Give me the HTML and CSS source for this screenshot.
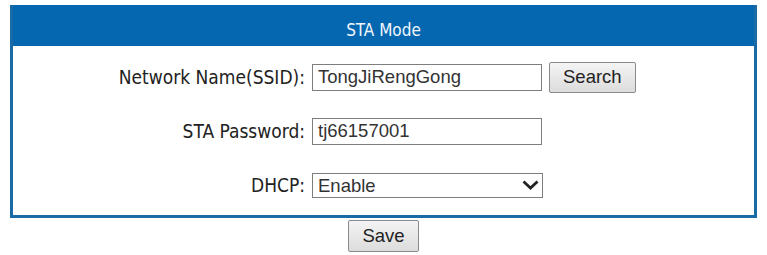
FILE: index.html
```html
<!DOCTYPE html>
<html lang="en">
<head>
    <meta charset="UTF-8">
    <meta name="viewport" content="width=device-width, initial-scale=1.0">
    <title>STA Mode</title>
    <link rel="stylesheet" href="styles.css">
</head>
<body>

    <div class="panel">
        <div class="panel-title">STA Mode</div>

        <div class="form-grid">
            <label class="field-label" for="ssid">Network Name(SSID):</label>
            <div class="field">
                <input type="text" id="ssid" class="text-input" value="TongJiRengGong">
                <button class="btn">Search</button>
            </div>

            <label class="field-label" for="password">STA Password:</label>
            <div class="field">
                <input type="text" id="password" class="text-input" value="tj66157001">
            </div>

            <label class="field-label" for="dhcp">DHCP:</label>
            <div class="field">
                <div class="select-wrap">
                    <select id="dhcp" class="select-input">
                        <option>Enable</option>
                        <option>Disable</option>
                    </select>
                    <!-- panah dropdown -->
                    <svg class="select-arrow" width="17" height="10" viewBox="0 0 17 10">
                        <path d="M1.5 1.5 L8.5 8 L15.5 1.5" fill="none" stroke="#222" stroke-width="2.8"/>
                    </svg>
                </div>
            </div>
        </div>
    </div>

    <div class="actions">
        <button class="btn btn-save">Save</button>
    </div>

</body>
</html>
```

FILE: styles.css
```css
/* Global Styles */
body {
    margin: 5px 10px;
    background-color: #fff;
    font-family: "DejaVu Sans Condensed", "DejaVu Sans", sans-serif;
    color: #222;
}

/* Panel */
.panel {
    border: 3px solid #1a6aa6;
    border-top: none;
}

.panel-title {
    background-color: #0667b1;
    color: #f2f6fb;
    font-size: 17px;
    text-align: center;
    height: 31px;
    padding-top: 10px;
    line-height: 31px;
}

.form-grid {
    display: grid;
    grid-template-columns: 292px auto;
    grid-auto-rows: 54px;
    column-gap: 7px;
    align-items: center;
    padding: 4px 0 3px;
}

.field-label {
    text-align: right;
    font-size: 19px;
}

.field {
    display: flex;
    align-items: center;
    gap: 7px;
}

.text-input,
.select-input {
    box-sizing: border-box;
    width: 230px;
    height: 27px;
    padding: 0 5px;
    border: 1px solid #7e7e7e;
    font-family: "Liberation Sans", Arial, sans-serif;
    font-size: 18.5px;
    color: #333;
    background-color: #fff;
    outline: none;
}

.select-wrap {
    position: relative;
}

.select-input {
    width: 231px;
    height: 25px;
    appearance: none;
    -webkit-appearance: none;
    border-radius: 0;
}

.select-arrow {
    position: absolute;
    right: 4px;
    top: 7px;
    pointer-events: none;
}

/* Tombol */
.btn {
    box-sizing: border-box;
    height: 31px;
    padding: 0 13px;
    border: 1px solid #8a8a8a;
    border-radius: 2px;
    background: linear-gradient(#f4f4f4, #dcdcdc);
    font-family: "Liberation Sans", Arial, sans-serif;
    font-size: 18.5px;
    color: #222;
    cursor: pointer;
}

.actions {
    display: flex;
    justify-content: center;
    padding-top: 2px;
}

.btn-save {
    width: 71px;
    height: 32px;
    padding: 0;
}
```
